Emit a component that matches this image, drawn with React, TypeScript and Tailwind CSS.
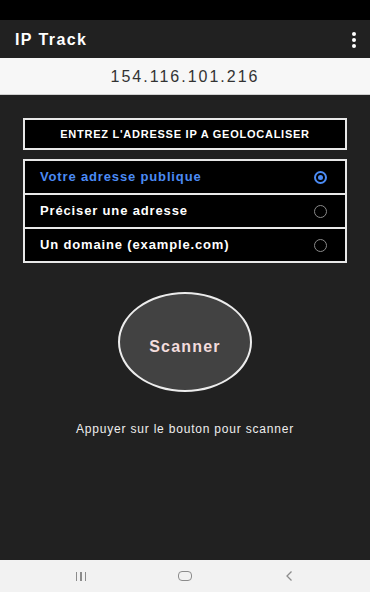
import React, { useState } from 'react';

const options = ['Votre adresse publique', 'Préciser une adresse', 'Un domaine (example.com)'];

export default function App() {
  const [selected, setSelected] = useState(0);

  return (
    <div
      className="w-[370px] h-[592px] flex flex-col bg-[#212121] overflow-hidden"
      style={{ fontFamily: '"Liberation Sans", Arial, sans-serif' }}
    >
      {/* Status bar */}
      <div className="h-[20px] bg-black shrink-0" />

      {/* App bar */}
      <div className="h-[38px] bg-[#212121] flex items-center justify-between pl-[15px] pr-[14px] pt-[2px] shrink-0">
        <span className="text-white text-[16px] font-bold tracking-[1.4px]">IP Track</span>
        <div className="flex flex-col gap-[2px]">
          <span className="w-[4px] h-[4px] bg-white rounded-full" />
          <span className="w-[4px] h-[4px] bg-white rounded-full" />
          <span className="w-[4px] h-[4px] bg-white rounded-full" />
        </div>
      </div>

      {/* IP display */}
      <div className="h-[37px] bg-[#f7f7f7] border-b border-[#cfcfcf] flex items-center justify-center pt-[2px] shrink-0">
        <span className="text-[#333] text-[16px] tracking-[2px]">154.116.101.216</span>
      </div>

      {/* Body */}
      <div className="flex-1 flex flex-col items-center pt-[23px]">
        <div className="w-[324px] h-[32px] bg-black border-2 border-[#e8e8e8] flex items-center justify-center">
          <span className="text-white text-[11px] font-bold tracking-[0.75px]">ENTREZ L'ADRESSE IP A GEOLOCALISER</span>
        </div>

        <div className="w-[324px] mt-[9px] border-2 border-[#e8e8e8] bg-[#e8e8e8] flex flex-col gap-[2px]">
          {options.map((label, i) => (
            <button
              key={label}
              onClick={() => setSelected(i)}
              className="h-[32px] bg-black flex items-center justify-between pl-[15px] pr-[18px] text-left"
            >
              <span
                className={`text-[13px] font-bold tracking-[0.85px] ${selected === i ? 'text-[#4b8bf4]' : 'text-white'}`}
              >
                {label}
              </span>
              {selected === i ? (
                <span className="w-[13px] h-[13px] rounded-full border-2 border-[#4b8bf4] flex items-center justify-center">
                  <span className="w-[5px] h-[5px] rounded-full bg-[#4b8bf4]" />
                </span>
              ) : (
                <span className="w-[13px] h-[13px] rounded-full border-[1.5px] border-[#8a8a8a]" />
              )}
            </button>
          ))}
        </div>

        <button className="mt-[29px] w-[134px] h-[100px] rounded-[50%] bg-[#424242] border-2 border-[#ececec] flex items-center justify-center pt-[10px]">
          <span className="text-[#f3dcdc] text-[16px] font-bold tracking-[1.2px]">Scanner</span>
        </button>

        <p className="mt-[28px] text-[#eeeeee] text-[12px] tracking-[0.8px]">Appuyer sur le bouton pour scanner</p>
      </div>

      {/* Navigation bar */}
      <div className="h-[32px] bg-[#f2f2f2] flex items-center justify-center shrink-0">
        <div className="w-[104px] flex justify-center">
          <div className="flex gap-[3px]">
            <span className="w-[1.5px] h-[9px] bg-[#8c8c8c]" />
            <span className="w-[1.5px] h-[9px] bg-[#8c8c8c]" />
            <span className="w-[1.5px] h-[9px] bg-[#8c8c8c]" />
          </div>
        </div>
        <div className="w-[104px] flex justify-center">
          <span className="w-[14px] h-[10px] rounded-[4px] border-[1.5px] border-[#8c8c8c]" />
        </div>
        <div className="w-[104px] flex justify-center">
          <svg width="8" height="12" viewBox="0 0 8 12" fill="none">
            <path d="M6.5 1.5 L2 6 L6.5 10.5" stroke="#8c8c8c" strokeWidth="1.3" />
          </svg>
        </div>
      </div>
    </div>
  );
}
